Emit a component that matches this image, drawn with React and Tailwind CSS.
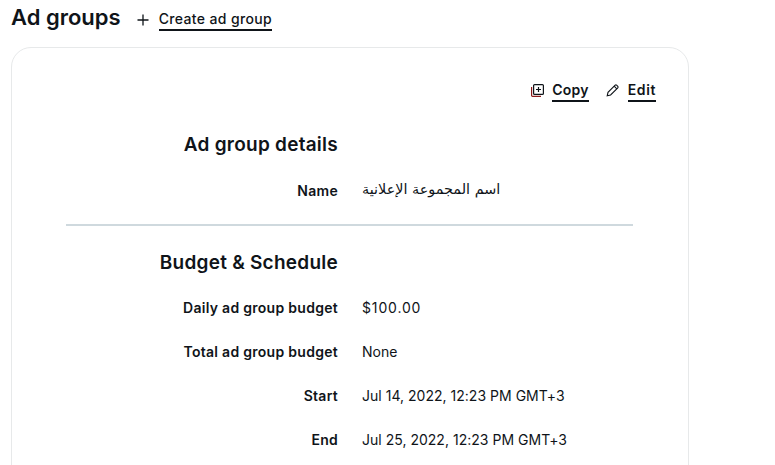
import React from "react";

const font = { fontFamily: '"Inter", "Noto Sans", sans-serif' };

function Row({ label, value, rtl, wide }) {
  let valueClass = "ml-[24px] text-[14px] tracking-[0.02px] text-[#0f1419]";
  if (rtl) valueClass = "ml-[24px] text-[14.4px] text-[#0f1419]";
  if (wide) valueClass = "ml-[24px] text-[14px] tracking-[0.85px] text-[#0f1419]";
  return (
    <div className="flex h-[44px] items-center">
      <div className="w-[326px] text-right text-[14px] font-semibold tracking-[0.28px] text-[#0f1419]">{label}</div>
      <div className={valueClass} style={rtl ? { fontFamily: '"DejaVu Sans", "Noto Sans", sans-serif' } : undefined}>
        {value}
      </div>
    </div>
  );
}

function Heading({ children }) {
  return (
    <div className="w-[326px] text-right text-[19px] font-semibold leading-[24px] tracking-[0.25px] text-[#0f1419]">
      {children}
    </div>
  );
}

export default function App() {
  return (
    <div className="h-[465px] w-[775px] overflow-hidden bg-white" style={font}>
      <div className="flex h-[47px] items-start pl-[11px]">
        <h1 className="mt-[3px] text-[22px] font-semibold leading-[28px] text-[#0f1419]">Ad groups</h1>
        <div className="ml-[16px] mt-[11px] flex items-center">
          <svg className="mb-[2px]" width="12" height="12" viewBox="0 0 12 12" fill="none" stroke="#0f1419" strokeWidth="1.3">
            <path d="M6 .5v11M.5 6h11" />
          </svg>
          <span className="ml-[10px] border-b-2 border-[#0f1419] pb-[2px] text-[14px] font-medium leading-[16px] tracking-[0.36px] text-[#0f1419]">
            Create ad group
          </span>
        </div>
      </div>
      <div className="ml-[11px] w-[678px] rounded-[20px] border border-[#e7e9ea] pb-[40px]">
        <div className="flex h-[54px] items-end justify-end pr-[32px]">
          <div className="flex items-center">
            <svg className="mb-[3px]" width="14" height="14" viewBox="0 0 14 14" fill="none" stroke="#0f1419" strokeWidth="1.2">
              <rect x="3.6" y="0.6" width="9.8" height="9.8" rx="1" />
              <path d="M8.5 3v5M6 5.5h5" />
              <path d="M1.6 3v8.4a1 1 0 0 0 1 1H11" stroke="#8b1a1a" />
            </svg>
            <span className="ml-[8px] border-b-2 border-[#0f1419] pb-[2px] text-[14px] font-semibold leading-[16px] tracking-[0.25px] text-[#0f1419]">Copy</span>
            <svg className="mb-[4px] ml-[17px]" width="14" height="14" viewBox="0 0 14 14" fill="none" stroke="#0f1419" strokeWidth="1.1">
              <path d="M1.2 12.8l.8-3.4 7.2-7.2a1 1 0 0 1 1.4 0l1.2 1.2a1 1 0 0 1 0 1.4l-7.2 7.2z" />
              <path d="M8.2 3.2l2.6 2.6" />
            </svg>
            <span className="ml-[8px] border-b-2 border-[#0f1419] pb-[2px] text-[14px] font-semibold leading-[16px] tracking-[0.6px] text-[#0f1419]">Edit</span>
          </div>
        </div>
        <div className="mt-[31px]">
          <Heading>Ad group details</Heading>
        </div>
        <div className="mt-[11px]">
          <Row label="Name" value="اسم المجموعة الإعلانية" rtl />
        </div>
        <div className="ml-[54px] mt-[12px] h-[2px] w-[567px] bg-[#cfd9de]" />
        <div className="mt-[25px]">
          <Heading>Budget &amp; Schedule</Heading>
        </div>
        <div className="mt-[10px]">
          <Row label="Daily ad group budget" value="$100.00" wide />
          <Row label="Total ad group budget" value="None" />
          <Row label="Start" value="Jul 14, 2022, 12:23 PM GMT+3" />
          <Row label="End" value="Jul 25, 2022, 12:23 PM GMT+3" />
        </div>
      </div>
    </div>
  );
}
